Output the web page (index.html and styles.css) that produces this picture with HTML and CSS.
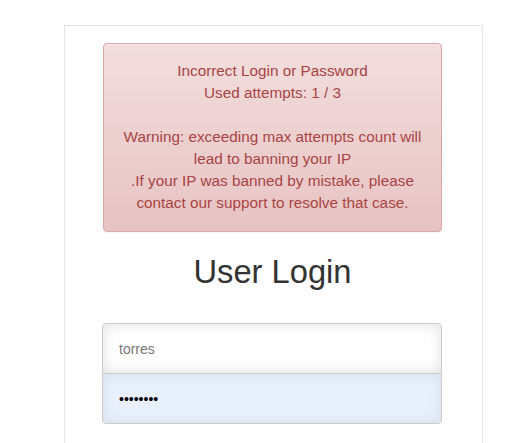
FILE: index.html
```html
<!DOCTYPE html>
<html lang="en">
<head>
<meta charset="utf-8">
<title>User Login</title>
<link rel="stylesheet" href="styles.css">
</head>
<body>
<div class="panel">
  <div class="alert alert-danger">
    Incorrect Login or Password<br>
    Used attempts: 1 / 3<br>
    <br>
    Warning: exceeding max attempts count will lead to banning your IP<br>
    .If your IP was banned by mistake, please contact our support to resolve that case.
  </div>
  <h2 class="form-title">User Login</h2>
  <form class="form-signin">
    <input class="form-control field-user" type="text" name="login" value="torres">
    <input class="form-control field-pass" type="password" name="password" value="password">
  </form>
</div>
</body>
</html>
```
FILE: styles.css
```css
html, body {
  margin: 0;
  padding: 0;
  background: #fff;
  font-family: "Liberation Sans", Arial, Helvetica, sans-serif;
  color: #333;
}

.panel {
  box-sizing: border-box;
  width: 419px;
  min-height: 440px;
  margin: 25px 0 0 64px;
  padding: 17px 41px 0 38px;
  border: 1px solid #e5e5e5;
  border-bottom: none;
}

.alert {
  box-sizing: border-box;
  width: 339px;
  padding: 16px 15px 17px;
  border: 1px solid #dca7a7;
  border-radius: 4px;
  font-size: 15.3px;
  line-height: 22px;
  text-align: center;
}

.alert-danger {
  color: #a94442;
  background-image: linear-gradient(to bottom, #f2dede 0, #e7c3c3 100%);
  box-shadow: inset 0 1px 0 rgba(255, 255, 255, .25), 0 1px 2px rgba(0, 0, 0, .05);
}

.form-title {
  width: 339px;
  margin: 22px 0 33px;
  font-size: 32.7px;
  font-weight: 500;
  line-height: 36px;
  text-align: center;
  color: #333;
}

.form-signin {
  display: flex;
  flex-direction: column;
  width: 340px;
  margin-left: -1px;
}

.form-control {
  box-sizing: border-box;
  display: block;
  width: 100%;
  height: 51px;
  margin: 0;
  padding: 0 16px;
  border: 1px solid #ccc;
  font-family: "Liberation Sans", Arial, Helvetica, sans-serif;
  font-size: 14px;
  color: #777;
  outline: none;
}

.field-user {
  margin-bottom: -1px;
  border-radius: 4px 4px 0 0;
  background: #fff;
  box-shadow: inset 0 0 14px rgba(0, 0, 0, .13);
}

.field-pass {
  border-radius: 0 0 4px 4px;
  background: #e8f0fe;
  color: #000;
  box-shadow: inset 0 0 14px rgba(0, 0, 0, .08);
}
```
